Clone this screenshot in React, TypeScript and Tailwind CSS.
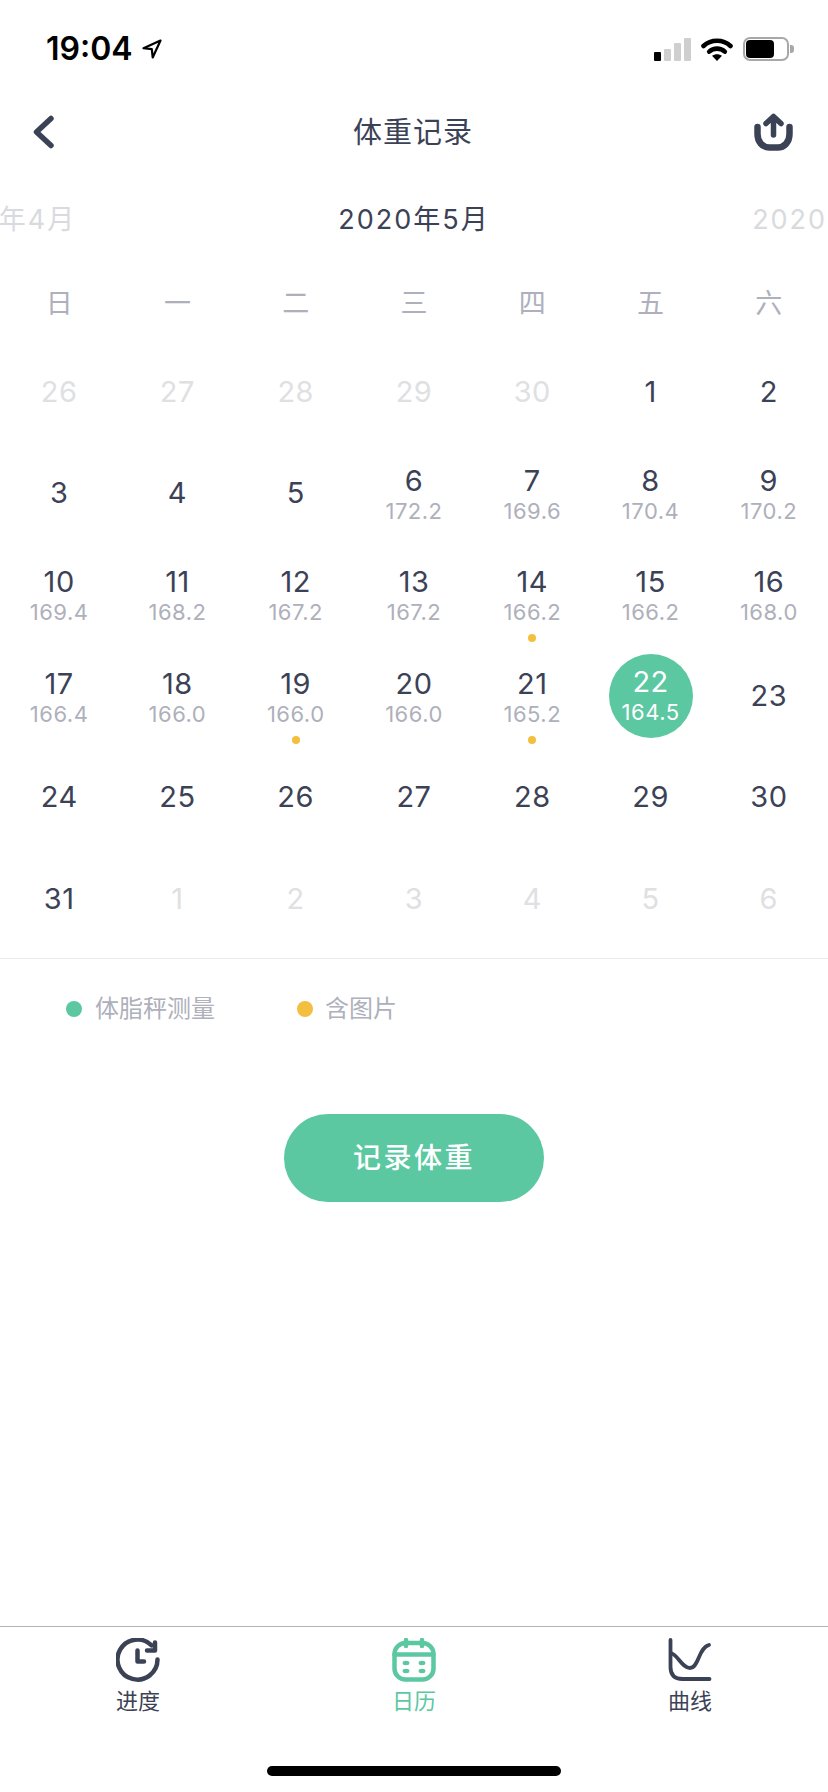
const SANS = "font-['Inter','Noto_Sans_CJK_SC',sans-serif]"

type Day = { n: number; v?: string; faded?: boolean; dot?: boolean; active?: boolean }

const days: Day[] = [
  { n: 26, faded: true }, { n: 27, faded: true }, { n: 28, faded: true }, { n: 29, faded: true }, { n: 30, faded: true }, { n: 1 }, { n: 2 },
  { n: 3 }, { n: 4 }, { n: 5 }, { n: 6, v: "172.2" }, { n: 7, v: "169.6" }, { n: 8, v: "170.4" }, { n: 9, v: "170.2" },
  { n: 10, v: "169.4" }, { n: 11, v: "168.2" }, { n: 12, v: "167.2" }, { n: 13, v: "167.2" }, { n: 14, v: "166.2", dot: true }, { n: 15, v: "166.2" }, { n: 16, v: "168.0" },
  { n: 17, v: "166.4" }, { n: 18, v: "166.0" }, { n: 19, v: "166.0", dot: true }, { n: 20, v: "166.0" }, { n: 21, v: "165.2", dot: true }, { n: 22, v: "164.5", active: true }, { n: 23 },
  { n: 24 }, { n: 25 }, { n: 26 }, { n: 27 }, { n: 28 }, { n: 29 }, { n: 30 },
  { n: 31 }, { n: 1, faded: true }, { n: 2, faded: true }, { n: 3, faded: true }, { n: 4, faded: true }, { n: 5, faded: true }, { n: 6, faded: true },
]

const weekdays = ["日", "一", "二", "三", "四", "五", "六"]

const StatusBar = () => (
  <div className="h-[98px] flex items-center justify-between pl-[46px] pr-[34px]">
    <div className="flex items-center gap-[9px]">
      <span className="text-[32px] leading-none font-semibold text-black">19:04</span>
      <svg width="20" height="20" viewBox="0 0 20 20" fill="none" stroke="#000" strokeWidth="2.2" strokeLinejoin="round">
        <path d="M18.5 1.5 1.5 9.2l8.3.9.9 8.4z" />
      </svg>
    </div>
    <div className="flex items-center gap-[10px]">
      <div className="flex items-end gap-[3px] h-[23px]">
        <div className="w-[7px] h-[9px] rounded-[1px] bg-black" />
        <div className="w-[7px] h-[12px] rounded-[1px] bg-[#cfcfcf]" />
        <div className="w-[7px] h-[18px] rounded-[1px] bg-[#cfcfcf]" />
        <div className="w-[7px] h-[23px] rounded-[1px] bg-[#cfcfcf]" />
      </div>
      <svg width="32" height="23" viewBox="0 0 32 23" fill="none" stroke="#000" strokeWidth="4.6" strokeLinecap="round">
        <path d="M2.5 8C10 1 22 1 29.5 8" />
        <path d="M8.2 13.6c4.4-4 11.2-4 15.6 0" />
        <path d="M16 23 11 17.8c2.8-2.2 7.2-2.2 10 0z" fill="#000" stroke="none" />
      </svg>
      <div className="flex items-center gap-[1px]">
        <div className="w-[46px] h-[24px] rounded-[7px] border-[2.5px] border-[#a8a8a8] p-[1px]">
          <div className="w-[28px] h-full rounded-[4px] bg-black" />
        </div>
        <div className="w-[4px] h-[8px] rounded-r-[3px] bg-[#a8a8a8]" />
      </div>
    </div>
  </div>
)

const NavBar = () => (
  <div className="h-[68px] flex items-center justify-between pl-[33px] pr-[35px]">
    <div className="w-[39px]">
      <svg width="22" height="38" viewBox="0 0 22 38" fill="none" stroke="#3c4256" strokeWidth="5.5" strokeLinecap="round" strokeLinejoin="round">
        <path d="M18 5.5 3.5 19 18 32.5" />
      </svg>
    </div>
    <span className="text-[29px] leading-none font-normal tracking-[1px] text-[#3c4256]">体重记录</span>
    <svg width="39" height="38" viewBox="0 0 39 38" fill="none" stroke="#3c4256" strokeWidth="6.5" strokeLinecap="round" strokeLinejoin="round">
      <path d="M3.5 14v7c0 8 5 13.5 12 13.5h8c7 0 12-5.5 12-13.5v-7" />
      <path d="M19.5 22V4M12 10.5 19.5 3.5 27 10.5" strokeWidth="5.5" />
    </svg>
  </div>
)

const MonthRow = () => (
  <div className="h-[106px] pt-[3px] overflow-hidden">
    <div className="w-[1242px] -ml-[207px] h-full flex items-center text-[27px] tracking-[2px] text-center">
      <span className="w-[414px] text-[#d9dade]">2020年4月</span>
      <span className="w-[414px] text-[#3c4256]">2020年5月</span>
      <span className="w-[414px] text-[#d9dade]">2020年6月</span>
    </div>
  </div>
)

const Cell = ({ d }: { d: Day }) => {
  if (d.active) {
    return (
      <div className="h-[101.4px] flex items-center justify-center">
        <div className="w-[84px] h-[84px] rounded-full bg-[#5cc8a2] flex flex-col items-center justify-center pt-[3px] text-white">
          <span className="text-[29px] leading-[30px] tracking-[0.5px]">{d.n}</span>
          <span className="text-[22px] leading-[30px] tracking-[0.5px]">{d.v}</span>
        </div>
      </div>
    )
  }
  return (
    <div className={`relative h-[101.4px] flex flex-col items-center justify-center ${d.v ? "pt-[6px]" : ""}`}>
      <span className={`text-[29px] leading-[30px] tracking-[0.5px] ${d.faded ? "text-[#dfe0e3]" : "text-[#3c4256]"}`}>{d.n}</span>
      {d.v && <span className="text-[22px] leading-[30px] tracking-[0.5px] text-[#aeb0bb]">{d.v}</span>}
      {d.dot && <span className="absolute left-1/2 -translate-x-1/2 bottom-[3px] w-2 h-2 rounded-full bg-[#f4bf3f]" />}
    </div>
  )
}

const Legend = () => (
  <div className="h-[100px] flex items-center pl-[66px] text-[24px] leading-none text-[#aeb0bb]">
    <span className="w-4 h-4 rounded-full bg-[#5cc8a2]" />
    <span className="ml-[13px]">体脂秤测量</span>
    <span className="ml-[82px] w-4 h-4 rounded-full bg-[#f4bf3f]" />
    <span className="ml-[12px]">含图片</span>
  </div>
)

const ClockIcon = () => (
  <svg width="44" height="44" viewBox="0 0 44 44" fill="none" stroke="#3c4256" strokeWidth="4.5" strokeLinecap="round" strokeLinejoin="round">
    <path d="M41.5 21.5A20 20 0 1 1 35.6 7.4" />
    <path d="M39 4.5v8h-8" />
    <path d="M21.5 12.5v11H28" />
  </svg>
)

const CalendarIcon = () => (
  <svg width="44" height="44" viewBox="0 0 44 44" fill="none" stroke="#5cc8a2" strokeWidth="4.5" strokeLinecap="round">
    <rect x="2.5" y="5" width="39" height="36.5" rx="11" />
    <path d="M2.5 16.5h39" />
    <path d="M14 2v6M30 2v6" />
    <g fill="#5cc8a2" stroke="none">
      <ellipse cx="14" cy="25" rx="3.4" ry="2.2" />
      <ellipse cx="30" cy="25" rx="3.4" ry="2.2" />
      <ellipse cx="14" cy="33" rx="3.4" ry="2.2" />
      <ellipse cx="30" cy="33" rx="3.4" ry="2.2" />
    </g>
  </svg>
)

const CurveIcon = () => (
  <svg width="44" height="44" viewBox="0 0 44 44" fill="none" stroke="#3c4256" strokeWidth="3.8" strokeLinecap="round">
    <path d="M2.5 2v27c0 8 4 12 12 12h27" />
    <path d="M3 15c7 2 11 15 19 15 9 0 8-20 19-23" />
  </svg>
)

const TabBar = () => (
  <div className="h-[166px] border-t border-[#b5b5b5] flex flex-col">
    <div className="grid grid-cols-3 pt-[11px]">
      <div className="flex flex-col items-center text-[#3c4256]">
        <ClockIcon />
        <span className="mt-[5px] text-[22px] leading-[28px]">进度</span>
      </div>
      <div className="flex flex-col items-center text-[#5cc8a2]">
        <CalendarIcon />
        <span className="mt-[5px] text-[22px] leading-[28px]">日历</span>
      </div>
      <div className="flex flex-col items-center text-[#3c4256]">
        <CurveIcon />
        <span className="mt-[5px] text-[22px] leading-[28px]">曲线</span>
      </div>
    </div>
    <div className="mt-auto mb-[16px] mx-auto w-[294px] h-[10px] rounded-full bg-black" />
  </div>
)

export default function App() {
  return (
    <div className={`h-[1792px] w-[828px] overflow-hidden bg-white flex flex-col ${SANS}`}>
      <StatusBar />
      <NavBar />
      <MonthRow />
      <div className="grid grid-cols-7 h-[61px] pt-[2px] items-center text-center text-[27px] leading-none text-[#aeb0bb]">
        {weekdays.map((w) => (
          <span key={w}>{w}</span>
        ))}
      </div>
      <div className="grid grid-cols-7 mt-2 pb-[9px] border-b border-[#ececec]">
        {days.map((d, i) => (
          <Cell key={i} d={d} />
        ))}
      </div>
      <Legend />
      <button className="mt-[55px] mx-auto w-[260px] h-[88px] rounded-full bg-[#5cc8a2] text-white text-[28px] font-medium tracking-[2.5px]">
        记录体重
      </button>
      <div className="flex-1" />
      <TabBar />
    </div>
  )
}
